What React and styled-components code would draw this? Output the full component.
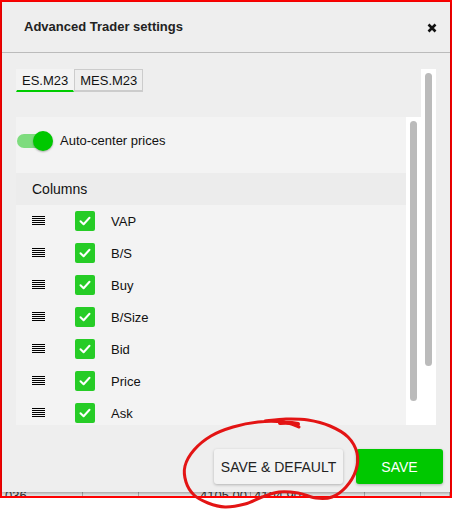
import React from "react";
import styled, { createGlobalStyle } from "styled-components";

const GlobalStyle = createGlobalStyle`
    body {
        margin: 0;
        background: #fff;
        font-family: "Liberation Sans", Arial, sans-serif;
        color: #111;
    }
`;

const Page = styled.div`
    position: relative;
    width: 452px;
    height: 510px;
`;

const Frame = styled.div`
    width: 452px;
    box-sizing: border-box;
    border: 2px solid #f00;
    display: flex;
    flex-direction: column;
`;

const Modal = styled.div`
    position: relative;
    z-index: 1;
    height: 490px;
    background: #eee;
    display: flex;
    flex-direction: column;
    box-shadow: 0 1px 3px rgba(0, 0, 0, 0.35);
`;

const Header = styled.div`
    height: 50px;
    flex: none;
    border-bottom: 1px solid #bbb;
    display: flex;
    align-items: center;
    justify-content: space-between;
    padding: 0 13px 0 22px;
`;

const Title = styled.div`
    font-size: 13px;
    font-weight: bold;
    color: #222;
    margin-top: -1px;
`;

const Close = styled.button`
    border: 0;
    padding: 0;
    background: none;
    width: 10px;
    height: 10px;
    display: flex;
    margin-top: 2px;
`;

const Body = styled.div`
    flex: 1;
    display: flex;
    flex-direction: column;
    padding-top: 16px;
`;

const ScrollArea = styled.div`
    height: 356px;
    margin: 0 14px;
    display: flex;
`;

const ScrollContent = styled.div`
    flex: 1;
    min-width: 0;
    display: flex;
    flex-direction: column;
    gap: 25px;
`;

const Track = styled.div`
    width: 15px;
    flex: none;
    background: #fff;
    padding: 4px;
    box-sizing: border-box;
`;

const Thumb = styled.div`
    width: 7px;
    height: ${props => props.$h}px;
    border-radius: 4px;
    background: #bbb;
`;

const Tabs = styled.div`
    display: flex;
    height: 23px;
`;

const Tab = styled.div`
    font-size: 13px;
    display: flex;
    align-items: center;
    padding: 0 5px;
    box-sizing: border-box;
    color: #111;
    background: ${props => (props.$active ? "#f3f3f3" : "#eee")};
    border: 1px solid ${props => (props.$active ? "#f3f3f3" : "#ccc")};
    border-bottom: 2px solid ${props => (props.$active ? "#0c0" : "#ccc")};
    padding-top: 1px;
`;

const Panel = styled.div`
    flex: 1;
    display: flex;
    min-height: 0;
`;

const PanelList = styled.div`
    flex: 1;
    background: #f3f3f3;
    overflow: hidden;
`;

const ToggleBlock = styled.div`
    height: 56px;
    box-sizing: border-box;
    padding: 14px 0 0 1px;
    display: flex;
    align-items: flex-start;
    gap: 7px;
    font-size: 13px;
`;

const ToggleLabel = styled.span`
    line-height: 20px;
`;

const Switch = styled.div`
    position: relative;
    width: 36px;
    height: 20px;
    flex: none;
    display: flex;
    align-items: center;
`;

const SwitchTrack = styled.div`
    width: 33px;
    height: 14px;
    border-radius: 7px;
    background: #7edc7e;
`;

const SwitchKnob = styled.div`
    position: absolute;
    right: 0;
    top: 0;
    width: 20px;
    height: 20px;
    border-radius: 50%;
    background: #00c800;
    box-shadow: 0 1px 2px rgba(0, 0, 0, 0.3);
`;

const SectionHead = styled.div`
    height: 32px;
    display: flex;
    align-items: center;
    padding-left: 16px;
    background: #ececec;
    font-size: 14px;
`;

const Row = styled.div`
    height: 32px;
    display: flex;
    align-items: center;
    padding-left: 16px;
    font-size: 13px;
`;

const Handle = styled.svg`
    width: 13px;
    height: 10px;
    flex: none;
    margin-right: 30px;
`;

const Check = styled.div`
    width: 20px;
    height: 20px;
    border-radius: 2px;
    background: #26cc26;
    display: flex;
    align-items: center;
    justify-content: center;
    margin-right: 16px;
`;

const Footer = styled.div`
    display: flex;
    justify-content: flex-end;
    gap: 13px;
    padding: 24px 7px 8px;
`;

const Button = styled.button`
    height: 35px;
    width: ${props => props.$w}px;
    border: 0;
    border-radius: 3px;
    font-family: "Liberation Sans", Arial, sans-serif;
    font-size: 14px;
    padding: 0;
    color: ${props => (props.$primary ? "#fff" : "#222")};
    background: ${props => (props.$primary ? "#00c800" : "#f3f3f3")};
    box-shadow: 0 1px 3px rgba(0, 0, 0, 0.25);
`;

const TableStrip = styled.div`
    height: 4px;
    background: #e4e4e4;
    display: flex;
    overflow: hidden;
`;

const Cell = styled.div`
    width: ${props => props.$w}px;
    flex: none;
    border-right: 1px solid #aaa;
    box-sizing: border-box;
    font-size: 13px;
    line-height: 13px;
    color: #333;
    text-align: ${props => props.$align || "left"};
    padding: 0 3px;
    margin-top: -3px;
`;

const Annotation = styled.svg`
    position: absolute;
    left: 0;
    top: 0;
    pointer-events: none;
    z-index: 2;
`;

const columns = ["VAP", "B/S", "Buy", "B/Size", "Bid", "Price", "Ask"];

const loop = [
    [299, 427], [283, 422], [258, 422], [233, 427], [211, 436], [194, 450],
    [185, 466], [186, 482], [194, 495], [208, 503], [225, 507], [245, 504],
    [262, 497], [279, 492], [298, 493], [316, 498], [332, 497], [346, 487],
    [356, 470], [357, 453], [348, 437], [330, 426], [308, 420], [286, 419],
    [265, 421]
];

function smoothPath(pts) {
    let d = `M ${pts[0][0]} ${pts[0][1]}`;
    for (let i = 0; i < pts.length - 1; i++) {
        const p0 = pts[i - 1] || pts[i];
        const p1 = pts[i];
        const p2 = pts[i + 1];
        const p3 = pts[i + 2] || p2;
        const c1 = [p1[0] + (p2[0] - p0[0]) / 6, p1[1] + (p2[1] - p0[1]) / 6];
        const c2 = [p2[0] - (p3[0] - p1[0]) / 6, p2[1] - (p3[1] - p1[1]) / 6];
        d += ` C ${c1[0]} ${c1[1]} ${c2[0]} ${c2[1]} ${p2[0]} ${p2[1]}`;
    }
    return d;
}

function DragHandle() {
    return (
        <Handle viewBox="0 0 13 10" shapeRendering="crispEdges">
            {[0, 2, 4, 6, 8].map(y => (
                <rect key={y} x="0" y={y} width="13" height="1" fill="#000" />
            ))}
        </Handle>
    );
}

function CheckBox() {
    return (
        <Check>
            <svg width="14" height="14" viewBox="0 0 14 14">
                <polyline points="2.5,7.2 5.6,10.2 11.5,3.8" fill="none" stroke="#fff" strokeWidth="2" strokeLinecap="round" strokeLinejoin="round" />
            </svg>
        </Check>
    );
}

export default function App() {
    return (
        <Page>
            <GlobalStyle />
            <Frame>
                <Modal>
                    <Header>
                        <Title>Advanced Trader settings</Title>
                        <Close aria-label="close">
                            <svg width="10" height="10" viewBox="0 0 10 10">
                                <path d="M1.5 1.5 L8.5 8.5 M8.5 1.5 L1.5 8.5" stroke="#111" strokeWidth="2.6" />
                            </svg>
                        </Close>
                    </Header>
                    <Body>
                        <ScrollArea>
                            <ScrollContent>
                                <Tabs>
                                    <Tab $active>ES.M23</Tab>
                                    <Tab>MES.M23</Tab>
                                </Tabs>
                                <Panel>
                                    <PanelList>
                                        <ToggleBlock>
                                            <Switch>
                                                <SwitchTrack />
                                                <SwitchKnob />
                                            </Switch>
                                            <ToggleLabel>Auto-center prices</ToggleLabel>
                                        </ToggleBlock>
                                        <SectionHead>Columns</SectionHead>
                                        {columns.map(name => (
                                            <Row key={name}>
                                                <DragHandle />
                                                <CheckBox />
                                                <span>{name}</span>
                                            </Row>
                                        ))}
                                    </PanelList>
                                    <Track>
                                        <Thumb $h={280} />
                                    </Track>
                                </Panel>
                            </ScrollContent>
                            <Track>
                                <Thumb $h={293} />
                            </Track>
                        </ScrollArea>
                        <Footer>
                            <Button $w={129}>SAVE &amp; DEFAULT</Button>
                            <Button $w={87} $primary>SAVE</Button>
                        </Footer>
                    </Body>
                </Modal>
                <TableStrip>
                    <Cell $w={81}>036</Cell>
                    <Cell $w={56} />
                    <Cell $w={112} $align="right">4105.00</Cell>
                    <Cell $w={114}>4104.90</Cell>
                    <Cell $w={56} />
                    <Cell $w={29} />
                </TableStrip>
            </Frame>
            <Annotation width="452" height="510" viewBox="0 0 452 510">
                <path d={smoothPath(loop)} fill="none" stroke="#e31414" strokeWidth="3" strokeLinecap="round" strokeLinejoin="round" />
                <path d="M280 423 Q289 422 298 424" fill="none" stroke="#e31414" strokeWidth="4" strokeLinecap="round" />
            </Annotation>
        </Page>
    );
}
